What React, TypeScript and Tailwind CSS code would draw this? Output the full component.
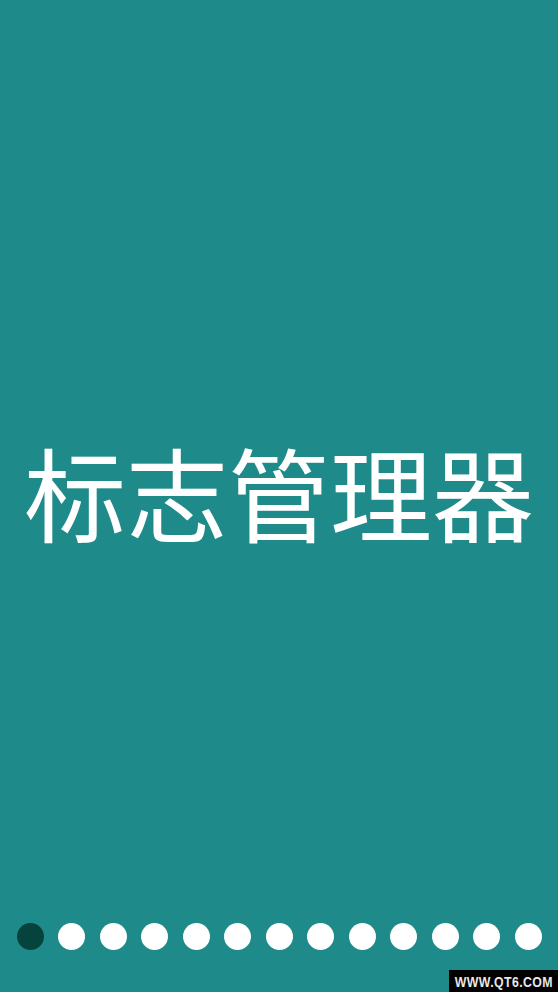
const PAGE_COUNT = 13;

export default function App() {
  const active = 0;

  return (
    <div className="relative flex h-[992px] w-full items-center justify-center overflow-hidden bg-[#1f8a8a]">
      <h1
        className="mb-[10px] text-[102px] leading-none font-normal text-white"
        style={{ fontFamily: '"Noto Sans CJK SC", "Noto Sans", sans-serif' }}
      >
        标志管理器
      </h1>

      <div className="absolute inset-x-0 bottom-[42px] flex justify-center gap-[14.5px]">
        {Array.from({ length: PAGE_COUNT }, (_, i) => (
          <span
            key={i}
            className={`h-[27px] w-[27px] rounded-full ${
              i === active ? "bg-[#07433d]" : "bg-white"
            }`}
          />
        ))}
      </div>

      <div className="absolute right-0 bottom-0 flex h-[22px] w-[109px] items-center justify-center bg-black">
        <span
          className="scale-x-[0.82] text-[15px] leading-none font-bold tracking-[0.5px] text-[#e8e8e8]"
          style={{ fontFamily: '"Liberation Sans", Arial, sans-serif' }}
        >
          WWW.QT6.COM
        </span>
      </div>
    </div>
  );
}
